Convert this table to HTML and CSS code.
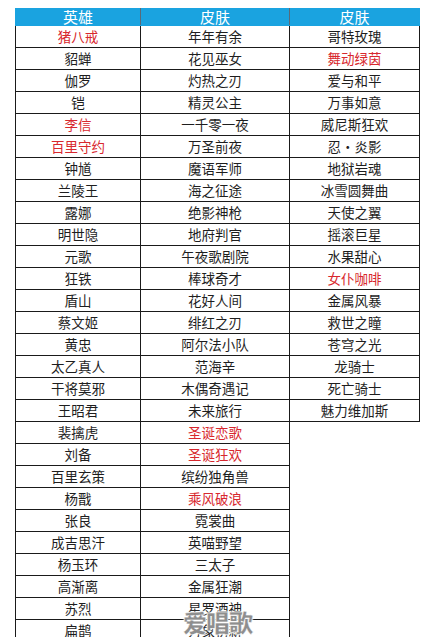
FILE: index.html
```html
<!DOCTYPE html>
<html lang="zh">
<head>
<meta charset="utf-8">
<link rel="stylesheet" href="styles.css">
</head>
<body>
<div class="page">
<table class="skins">
<colgroup><col class="c1"><col class="c2"><col class="c3"></colgroup>
<thead>
<tr><th>英雄</th><th>皮肤</th><th>皮肤</th></tr>
</thead>
<tbody>
<tr><td class="red">猪八戒</td><td>年年有余</td><td>哥特玫瑰</td></tr>
<tr><td>貂蝉</td><td>花见巫女</td><td class="red">舞动绿茵</td></tr>
<tr><td>伽罗</td><td>灼热之刃</td><td>爱与和平</td></tr>
<tr><td>铠</td><td>精灵公主</td><td>万事如意</td></tr>
<tr><td class="red">李信</td><td>一千零一夜</td><td>威尼斯狂欢</td></tr>
<tr><td class="red">百里守约</td><td>万圣前夜</td><td>忍·炎影</td></tr>
<tr><td>钟馗</td><td>魔语军师</td><td>地狱岩魂</td></tr>
<tr><td>兰陵王</td><td>海之征途</td><td>冰雪圆舞曲</td></tr>
<tr><td>露娜</td><td>绝影神枪</td><td>天使之翼</td></tr>
<tr><td>明世隐</td><td>地府判官</td><td>摇滚巨星</td></tr>
<tr><td>元歌</td><td>午夜歌剧院</td><td>水果甜心</td></tr>
<tr><td>狂铁</td><td>棒球奇才</td><td class="red">女仆咖啡</td></tr>
<tr><td>盾山</td><td>花好人间</td><td>金属风暴</td></tr>
<tr><td>蔡文姬</td><td>绯红之刃</td><td>救世之瞳</td></tr>
<tr><td>黄忠</td><td>阿尔法小队</td><td>苍穹之光</td></tr>
<tr><td>太乙真人</td><td>范海辛</td><td>龙骑士</td></tr>
<tr><td>干将莫邪</td><td>木偶奇遇记</td><td>死亡骑士</td></tr>
<tr><td>王昭君</td><td>未来旅行</td><td>魅力维加斯</td></tr>
<tr><td>裴擒虎</td><td class="red">圣诞恋歌</td><td class="empty"></td></tr>
<tr><td>刘备</td><td class="red">圣诞狂欢</td><td class="empty"></td></tr>
<tr><td>百里玄策</td><td>缤纷独角兽</td><td class="empty"></td></tr>
<tr><td>杨戬</td><td class="red">乘风破浪</td><td class="empty"></td></tr>
<tr><td>张良</td><td>霓裳曲</td><td class="empty"></td></tr>
<tr><td>成吉思汗</td><td>英喵野望</td><td class="empty"></td></tr>
<tr><td>杨玉环</td><td>三太子</td><td class="empty"></td></tr>
<tr><td>高渐离</td><td>金属狂潮</td><td class="empty"></td></tr>
<tr><td>苏烈</td><td>星罗酒神</td><td class="empty"></td></tr>
<tr><td>扁鹊</td><td>万象初新</td><td class="empty"></td></tr>
</tbody>
</table>
<div class="watermark">爱唱歌</div>
</div>
</body>
</html>
```

FILE: styles.css
```css
html, body {
  margin: 0;
  padding: 0;
  background: #ffffff;
}

.page {
  position: relative;
  width: 430px;
  height: 637px;
  overflow: hidden;
  padding: 8px 0 0 15px;
  box-sizing: border-box;
  font-family: "Noto Sans CJK SC", "Noto Sans", sans-serif;
}

.skins {
  border-collapse: collapse;
  table-layout: fixed;
  width: 404px;
}

.c1 { width: 125px; }
.c2 { width: 149px; }
.c3 { width: 130px; }

.skins th {
  background: #1aa3e0;
  color: #ffffff;
  font-weight: normal;
  font-size: 15px;
  height: 16px;
  line-height: 16px;
  padding: 0;
  border: 1px solid #1aa3e0;
  border-right-color: #5a6a78;
}

.skins th:last-child {
  border-right-color: #1aa3e0;
}

.skins td {
  border: 1px solid #1a1a1a;
  font-size: 13.5px;
  color: #1e1e1e;
  text-align: center;
  height: 21px;
  line-height: 21px;
  padding: 0;
  white-space: nowrap;
}

.skins td.red {
  color: #d8282e;
}

.skins td.empty {
  border: none;
}

.watermark {
  position: absolute;
  left: 183px;
  top: 604px;
  font-size: 24px;
  font-weight: 900;
  color: #8e8e8e;
  letter-spacing: -1px;
  -webkit-text-stroke: 0.4px #ffffff;
  text-shadow: 0 0 2px #ffffff, 0 0 2px #ffffff;
}
```
